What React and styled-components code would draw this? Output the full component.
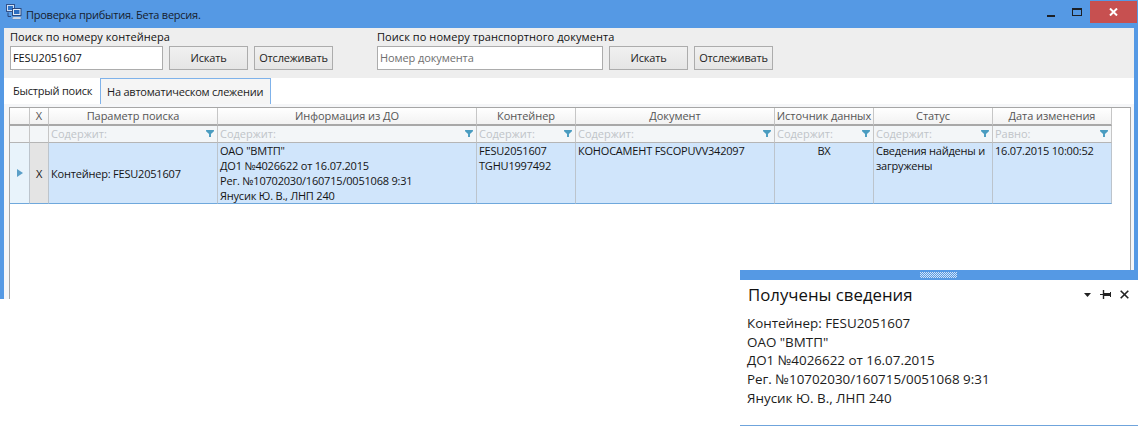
import React from "react";
import styled, { createGlobalStyle } from "styled-components";

const Global = createGlobalStyle`
  html, body { margin: 0; padding: 0; background: #fff; }
  body { font-family: "Open Sans", "Noto Sans", sans-serif; font-size: 11px; color: #1c1c1c; }
  * { box-sizing: border-box; }
`;

const Page = styled.div`
  position: relative;
  width: 1138px;
  height: 429px;
  overflow: hidden;
  background: #fff;
`;
const Win = styled.div`
  width: 1138px;
  height: 299px;
  background: #5599e4;
  display: flex;
  flex-direction: column;
  padding: 0 4px 0 4px;
`;
const TitleBar = styled.div`
  height: 28px;
  margin-left: -4px;
  margin-right: -4px;
  display: flex;
  align-items: flex-start;
  flex: none;
`;
const AppIcon = styled.svg`
  width: 16px;
  height: 16px;
  margin: 4px 0 0 6px;
  flex: none;
`;
const TitleText = styled.span`
  margin: 7px 0 0 4px;
  font-size: 11px;
  letter-spacing: -0.25px;
  line-height: 16px;
  color: #16212e;
`;
const WinButtons = styled.div`
  margin-left: auto;
  display: flex;
  align-items: flex-start;
  padding: 1px 1px 0 0;
`;
const WinBtn = styled.div`
  width: ${(p) => p.$w}px;
  height: 22px;
  display: flex;
  align-items: center;
  justify-content: center;
  background: ${(p) => p.$bg || "transparent"};
`;
const Toolbar = styled.div`
  height: 50px;
  flex: none;
  background: #eeeeee;
  display: flex;
  padding: 1px 0 0 6px;
  gap: 44px;
`;
const SearchGroup = styled.div`
  display: flex;
  flex-direction: column;
`;
const GroupLabel = styled.div`
  height: 17px;
  line-height: 16px;
  font-size: 11px;
  font-weight: 500;
  letter-spacing: 0.07px;
  color: #111;
`;
const FieldRow = styled.div`
  display: flex;
  gap: 6px;
`;
const Field = styled.div`
  width: ${(p) => p.$w}px;
  height: 24px;
  background: #fff;
  border: 1px solid #acacac;
  padding: 0 2px;
  line-height: 22px;
  font-size: 11px;
  letter-spacing: -0.1px;
  color: ${(p) => (p.$placeholder ? "#6f6f6f" : "#111")};
`;
const Btn = styled.div`
  width: 79px;
  height: 24px;
  border: 1px solid #acacac;
  background: linear-gradient(#f0f0f0, #e5e5e5);
  text-align: center;
  line-height: 22px;
  font-size: 11px;
  letter-spacing: -0.2px;
  color: #1c1c1c;
  white-space: nowrap;
`;
const TabStrip = styled.div`
  height: 26px;
  flex: none;
  background: #fff;
  display: flex;
`;
const Tab = styled.div`
  height: 26px;
  line-height: 25px;
  font-size: 11px;
  letter-spacing: -0.22px;
  padding: 0 ${(p) => (p.$active ? 6 : 9)}px;
  width: ${(p) => (p.$active ? 171 : 96)}px;
  white-space: nowrap;
  color: #1c1c1c;
  background: ${(p) => (p.$active ? "#f5f5f5" : "#fff")};
  border: ${(p) => (p.$active ? "1px solid #7fb2ea" : "none")};
  border-bottom: none;
`;
const TabPanel = styled.div`
  flex: 1;
  background: #f5f6f8;
  padding: 3px 3px 0 5px;
  display: flex;
`;
const GridFrame = styled.div`
  flex: 1;
  background: #fff;
  border: 1px solid #a6a6a6;
  border-bottom: none;
`;
const Grid = styled.div`
  display: grid;
  width: 1102px;
  grid-template-columns: 20px 19px 169px 259px 99px 199px 99px 119px 119px;
  grid-template-rows: 18px 17px 61px;
`;
const Head = styled.div`
  background: linear-gradient(#ffffff, #f2f2f2);
  border-right: 1px solid #c6c6c6;
  border-bottom: 2px solid #a8a8a8;
  text-align: center;
  line-height: 16px;
  color: #555;
  white-space: nowrap;
  overflow: hidden;
  font-size: 11px;
  letter-spacing: -0.05px;
`;
const Filter = styled.div`
  position: relative;
  background: #f3f6f8;
  border-right: 1px solid #c6c6c6;
  border-bottom: 1px solid #b5b5b5;
  padding-left: 2px;
  line-height: 15px;
  color: #c0c4c8;
  font-size: 11px;
  white-space: nowrap;
`;
const FunnelIcon = styled.svg`
  position: absolute;
  right: 3px;
  top: 4px;
  width: 8px;
  height: 7px;
`;
const Cell = styled.div`
  background: ${(p) => p.$bg || "#d0e5fb"};
  border-right: 1px solid #bcc4cc;
  border-bottom: 1px solid #6fa8dc;
  padding: 0 2px;
  line-height: 15px;
  color: #141414;
  font-size: 11px;
  letter-spacing: -0.2px;
  display: flex;
  flex-direction: column;
  justify-content: ${(p) => (p.$center ? "center" : "flex-start")};
  align-items: ${(p) => (p.$mid ? "center" : "flex-start")};
  white-space: ${(p) => (p.$wrap ? "normal" : "nowrap")};
`;
const Popup = styled.div`
  position: absolute;
  left: 740px;
  top: 270px;
  width: 398px;
  height: 159px;
  background: #fff;
  display: flex;
  flex-direction: column;
`;
const Grip = styled.div`
  height: 10px;
  flex: none;
  background: #5599e4;
  display: flex;
  justify-content: center;
  padding: 2px 0 0 0;
`;
const GripDots = styled.div`
  width: 37px;
  height: 6px;
  margin-left: -1px;
  background: repeating-conic-gradient(#5599e4 0 25%, #d4e4f6 0 50%) 0 0 / 2px 2px;
`;
const PopupHead = styled.div`
  display: flex;
  align-items: center;
  height: 29px;
  padding: 0 9px 0 8px;
  flex: none;
`;
const PopupTitle = styled.div`
  font-size: 16.8px;
  line-height: 28px;
  color: #111;
  margin-right: auto;
`;
const PopupIcons = styled.div`
  display: flex;
  align-items: center;
  gap: 9px;
`;
const PopupBody = styled.div`
  padding: 5px 0 0 7px;
  font-size: 13.4px;
  line-height: 18.7px;
  color: #1c1c1c;
  flex: 1;
`;
const PopupRule = styled.div`
  height: 1px;
  background: #6fa4dc;
  margin-bottom: 3px;
  flex: none;
`;

const Funnel = () => (
  <FunnelIcon viewBox="0 0 9 8">
    <path d="M0 0h9v1.500L5.600 4.600V8H3.400V4.600L0 1.500z" fill="#4a9cc0" />
  </FunnelIcon>
);

const columns = ["Параметр поиска", "Информация из ДО", "Контейнер", "Документ", "Источник данных", "Статус", "Дата изменения"];

export default function App() {
  return (
    <Page>
      <Global />
      <Win>
        <TitleBar>
          <AppIcon viewBox="0 0 16 16">
            <rect x=".5" y=".5" width="8" height="7" fill="#cfe0f4" stroke="#33528a" />
            <rect x="2" y="2" width="5" height="4" fill="#2f74c8" />
            <rect x="6.500" y="4.500" width="8.500" height="7" fill="#dfe9f6" stroke="#2b4a80" />
            <rect x="8" y="6" width="5.500" height="4" fill="#2a6cc0" />
            <path d="M7 13h8v2H6z" fill="#eef2f8" stroke="#5a7aa8" strokeWidth=".5" />
            <path d="M2 8.500v4h3" fill="none" stroke="#2b4a80" />
          </AppIcon>
          <TitleText>Проверка прибытия. Бета версия.</TitleText>
          <WinButtons>
            <WinBtn $w={26}>
              <svg width="8" height="2" style={{ marginTop: 7 }}><rect width="8" height="2" fill="#1c2026" /></svg>
            </WinBtn>
            <WinBtn $w={26}>
              <svg width="10" height="8"><rect x=".5" y=".5" width="9" height="7" fill="none" stroke="#1c2026" /><rect width="10" height="2" fill="#1c2026" /></svg>
            </WinBtn>
            <WinBtn $w={47} $bg="#c75050">
              <svg width="9" height="8" viewBox="0 0 9 8"><path d="M1 .5l7 7M8 .5l-7 7" stroke="#fff" strokeWidth="2" /></svg>
            </WinBtn>
          </WinButtons>
        </TitleBar>
        <Toolbar>
          <SearchGroup>
            <GroupLabel>Поиск по номеру контейнера</GroupLabel>
            <FieldRow>
              <Field $w={153}>FESU2051607</Field>
              <Btn>Искать</Btn>
              <Btn>Отслеживать</Btn>
            </FieldRow>
          </SearchGroup>
          <SearchGroup>
            <GroupLabel>Поиск по номеру транспортного документа</GroupLabel>
            <FieldRow>
              <Field $w={226} $placeholder>Номер документа</Field>
              <Btn>Искать</Btn>
              <Btn>Отслеживать</Btn>
            </FieldRow>
          </SearchGroup>
        </Toolbar>
        <TabStrip>
          <Tab>Быстрый поиск</Tab>
          <Tab $active>На автоматическом слежении</Tab>
        </TabStrip>
        <TabPanel>
          <GridFrame>
            <Grid>
              <Head />
              <Head>X</Head>
              {columns.map((c) => <Head key={c}>{c}</Head>)}
              <Filter />
              <Filter />
              {columns.map((c, i) => (
                <Filter key={c}>{i === 6 ? "Равно:" : "Содержит:"}<Funnel /></Filter>
              ))}
              <Cell $bg="#e8f3fb" $center $mid>
                <svg width="6" height="8" viewBox="0 0 6 8"><path d="M0 0l6 4-6 4z" fill="#5a9fc8" /></svg>
              </Cell>
              <Cell $bg="#e4e4e4" $center $mid>X</Cell>
              <Cell $center>Контейнер: FESU2051607</Cell>
              <Cell>
                <span>ОАО "ВМТП"</span>
                <span>ДО1 №4026622 от 16.07.2015</span>
                <span>Рег. №10702030/160715/0051068 9:31</span>
                <span>Янусик Ю. В., ЛНП 240</span>
              </Cell>
              <Cell>
                <span>FESU2051607</span>
                <span>TGHU1997492</span>
              </Cell>
              <Cell>КОНОСАМЕНТ FSCOPUVV342097</Cell>
              <Cell $mid>ВХ</Cell>
              <Cell $wrap>Сведения найдены и загружены</Cell>
              <Cell>16.07.2015 10:00:52</Cell>
            </Grid>
          </GridFrame>
        </TabPanel>
      </Win>
      <Popup>
        <Grip><GripDots /></Grip>
        <PopupHead>
          <PopupTitle>Получены сведения</PopupTitle>
          <PopupIcons>
            <svg width="7" height="4" viewBox="0 0 7 4"><path d="M0 0h7L3.500 4z" fill="#222" /></svg>
            <svg width="11" height="9" viewBox="0 0 11 9"><path d="M0 4.500h4" stroke="#222" /><path d="M3.500 0v9" stroke="#222" strokeWidth="1.400" /><path d="M4 3h6v3H4z" fill="#222" /><path d="M10.500 2v5" stroke="#222" /></svg>
            <svg width="9" height="9" viewBox="0 0 9 9"><path d="M.7.700l7.600 7.600M8.300.700L.7 8.300" stroke="#222" strokeWidth="1.600" /></svg>
          </PopupIcons>
        </PopupHead>
        <PopupBody>
          <div>Контейнер: FESU2051607</div>
          <div>ОАО "ВМТП"</div>
          <div>ДО1 №4026622 от 16.07.2015</div>
          <div>Рег. №10702030/160715/0051068 9:31</div>
          <div>Янусик Ю. В., ЛНП 240</div>
        </PopupBody>
        <PopupRule />
      </Popup>
    </Page>
  );
}
